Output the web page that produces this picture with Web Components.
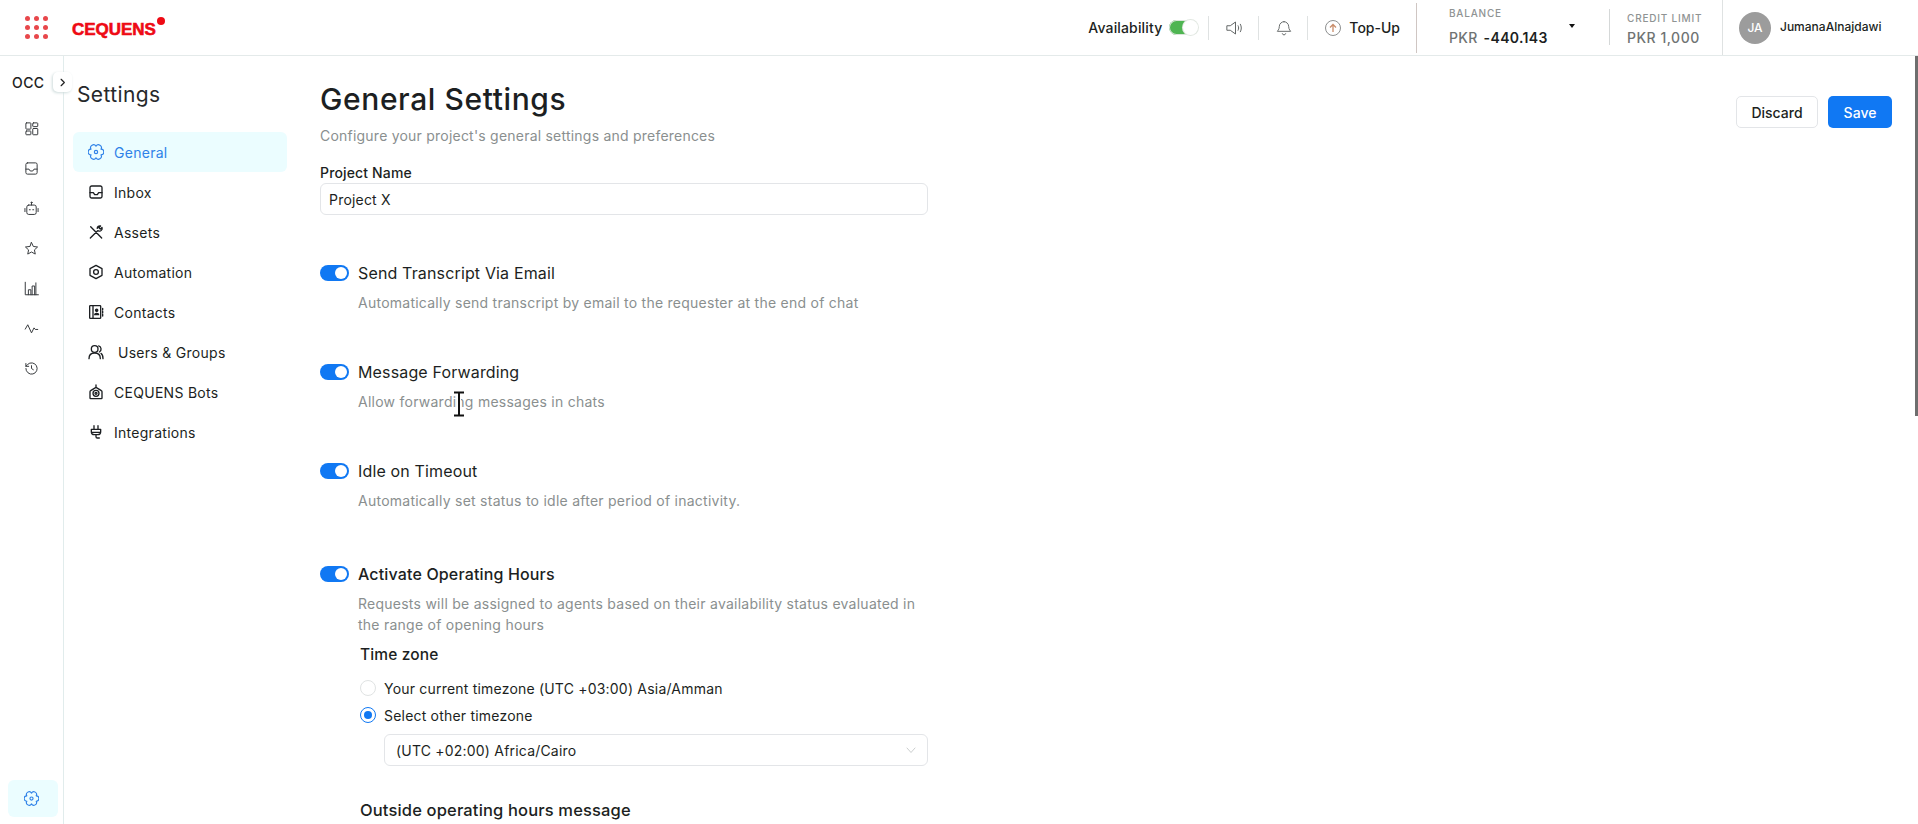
<!doctype html>
<html>
<head>
<meta charset="utf-8">
<title>General Settings</title>
<style>
  html, body { margin: 0; height: 100%; background: #fff; overflow: hidden; }
  body { font-family: Inter, "Liberation Sans", sans-serif; color: #1c1f22; }
  cq-page { height: 824px; }
</style>
</head>
<body>
<cq-page>
  <cq-header slot="header"></cq-header>
  <cq-rail slot="rail"></cq-rail>
  <cq-settings-nav slot="nav"></cq-settings-nav>
  <cq-general-settings></cq-general-settings>
</cq-page>

<script>
const ICONS = {
  gear: `<path d="M19.500 7.700A4.200 4.200 0 0 1 19.500 16.300A4.200 4.200 0 0 1 12 20.600A4.200 4.200 0 0 1 4.500 16.300A4.200 4.200 0 0 1 4.500 7.700A4.200 4.200 0 0 1 12 3.400A4.200 4.200 0 0 1 19.500 7.700z"/><circle cx="12" cy="12" r="2.500"/>`,
  dashboard: `<rect x="3" y="3" width="8" height="10" rx="1"/><rect x="14" y="3" width="8" height="6" rx="1"/><rect x="3" y="16" width="8" height="6" rx="1"/><rect x="14" y="12" width="8" height="10" rx="1"/>`,
  inbox: `<path d="M5.500 3h13a2.500 2.500 0 0 1 2.500 2.500v13a2.500 2.500 0 0 1-2.500 2.500h-13A2.500 2.500 0 0 1 3 18.500v-13A2.500 2.500 0 0 1 5.500 3z"/><path d="M3 13h5l2 3h4l2-3h5"/>`,
  bot: `<rect x="4.500" y="6.500" width="15" height="15" rx="3"/><path d="M12 6.500V3M1.500 12v5M22.500 12v5M8.500 14h1.500M14 14h1.500"/><circle cx="12" cy="2.500" r=".9"/>`,
  star: `<path d="M12 2.500l2.900 6.200 6.800.9-5 4.600 1.300 6.700-6-3.300-6 3.300 1.300-6.700-5-4.600 6.800-.9z"/>`,
  chart: `<path d="M2 2v20h21M7 22v-8h4v8M13 22V8h4v14M19 22V3"/>`,
  pulse: `<path d="M2 13l4-7 6 13 4-8 2 2.500h4"/>`,
  history: `<path d="M3 12a9 9 0 1 0 2.800-6.500L3 8.500M3 4v4.500h4.500M12 7.500V12l3 2"/>`,
  tools: `<path d="M3.500 21L14.500 10M13.800 6.500a4 4 0 0 1 5-3.500l-2.500 2.500 2.200 2.200L21 5.200a4 4 0 0 1-5.500 5M4 4l16.500 17"/>`,
  hexagon: `<path d="M12 2l9 5v10l-9 5-9-5V7z"/><circle cx="12" cy="12" r="3.600"/>`,
  contacts: `<rect x="2.500" y="2.500" width="16.500" height="19" rx="1"/><path d="M7.500 2.500v19M22 6.500v2.500M22 11v2.500M22 15.500v2.500"/><circle cx="13" cy="9.500" r="1.700" fill="currentColor"/><path d="M10 16c0-2.500 6-2.500 6 0z" fill="currentColor"/>`,
  users: `<circle cx="10" cy="7.500" r="5"/><path d="M1.500 22c0-5.500 3.800-8.500 8.500-8.500s8.500 3 8.500 8.500M16 2.800a5 5 0 0 1 1 9.200M19.500 14c2 1.200 3 4 3 8"/>`,
  botframe: `<path d="M12 1.500V5M12 5l8 5a2 2 0 0 1 1 1.700V21a1 1 0 0 1-1 1H4a1 1 0 0 1-1-1v-9.300a2 2 0 0 1 1-1.700z"/><circle cx="12" cy="14" r="4.500"/><circle cx="12" cy="14" r="1.500"/>`,
  plug: `<path d="M9 2.500V8M15 2.500V8M5 8h14v3.500a4.500 4.500 0 0 1-4.500 4.500h-5A4.500 4.500 0 0 1 5 11.500zM5 12.500h14M12 16v3a2 2 0 0 0 2 2h3"/>`,
  speaker: `<path d="M3 9h4l7-5v16l-7-5H3zM17.500 9c1 1.800 1 4.200 0 6M20.500 7c1.700 3 1.700 7 0 10"/>`,
  bell: `<path d="M12 2.500a7 7 0 0 0-7 7c0 5-3 7-3 7.500h20c0-.5-3-2.500-3-7.500a7 7 0 0 0-7-7zM9.500 20.500a2.600 2.600 0 0 0 5 0"/>`,
  chevronRight: `<path d="M9 5l7 7-7 7"/>`,
  chevronDown: `<path d="M4 8l8 9 8-9"/>`
};

// Small base so every element only has to give its markup
class ShadowElement extends HTMLElement {
  constructor() {
    super();
    this.shadow = this.attachShadow({ mode: "open" });
  }

  template() {
    return "";
  }

  connectedCallback() {
    this.shadow.innerHTML = this.template();
  }
}

class CqIcon extends ShadowElement {
  template() {
    const name = this.getAttribute("name");
    const width = this.getAttribute("stroke") || "2";
    return `
<style>
  :host { display: inline-flex; width: var(--icon-size, 16px); height: var(--icon-size, 16px); flex: none; }
  svg { width: 100%; height: 100%; fill: none; stroke: currentColor; stroke-linecap: round; stroke-linejoin: round; }
</style>
<svg viewBox="0 0 24 24" stroke-width="${width}">${ICONS[name]}</svg>`;
  }
}

class CqPage extends ShadowElement {
  template() {
    return `
<style>
  :host { display: grid; grid-template-columns: 64px 256px 1fr; grid-template-rows: 56px 1fr; position: relative; overflow: hidden; }
  .header { grid-column: 1 / -1; display: block; }
  .cursor { position: absolute; left: 452px; top: 391px; width: 14px; height: 26px; }
  .thumb { position: absolute; right: 0; top: 56px; width: 3px; height: 360px; background: #6e6e6e; }
</style>
<div class="header"><slot name="header"></slot></div>
<slot name="rail"></slot>
<slot name="nav"></slot>
<slot></slot>
<svg class="cursor" viewBox="0 0 14 26"><path d="M2 1.500h10M2 24.500h10M7 1.500v23" fill="none" stroke="#fff" stroke-width="4"/><path d="M2 1.500h10M2 24.500h10M7 1.500v23" fill="none" stroke="#111" stroke-width="2"/></svg>
<div class="thumb"></div>`;
  }
}

class CqHeader extends ShadowElement {
  template() {
    const dots = Array.from({ length: 9 }, () => "<i></i>").join("");
    return `
<style>
  :host { display: flex; align-items: center; height: 55px; border-bottom: 1px solid #e4eaea; font-size: 14px; background: #fff; }
  .dots { display: grid; grid-template-columns: repeat(3, 5px); gap: 4px; margin-left: 25px; }
  .dots i { width: 5px; height: 5px; border-radius: 50%; background: #e8474b; }
  .logo { position: relative; top: 2px; margin-left: 24px; font: 900 17px/20px "Liberation Sans", sans-serif; color: #ee0a14; letter-spacing: -.05px; -webkit-text-stroke: .6px #ee0a14; }
  .logo::after { content: ""; position: absolute; left: 85px; top: -3px; width: 8px; height: 8px; border-radius: 50%; background: #ee0a14; }
  .tools { margin-left: auto; display: flex; align-items: center; height: 100%; color: #1c1f22; }
  .avail { letter-spacing: .15px; font-weight: 500; }
  .sep { width: 1px; height: 24px; background: #dfe2e2; }
  .switch { width: 29px; height: 15px; margin: 0 10px 0 7px; border-radius: 8px; background: linear-gradient(90deg, #4fb552 55%, #fff 55%); box-shadow: inset 0 0 0 1px #dbe5db; position: relative; }
  .switch::after { content: ""; position: absolute; right: 0; top: 0; width: 15px; height: 15px; border-radius: 50%; background: #fff; box-shadow: 0 0 0 1px #e2e8e2; }
  .gray { color: #5f6363; }
  .speaker { margin: 0 15px 0 16px; }
  .bell { margin: 0 15px 0 17px; }
  .topup { display: flex; align-items: center; gap: 8px; margin: 0 16px 0 17px; font-weight: 500; font-size: 14px; }
  .up { width: 16px; height: 16px; border-radius: 50%; border: 1px solid #8d8f8f; display: grid; place-items: center; box-sizing: border-box; color: #c98d6b; }
  .up svg { width: 10px; height: 10px; }
  .balance { width: 193px; height: 50px; align-self: flex-start; margin-top: 3px; border-left: 1px solid #cfc6c3; padding-left: 32px; box-sizing: border-box; position: relative; }
  .cap { font-size: 10px; line-height: 12px; letter-spacing: .8px; color: #8f9393; font-weight: 500; display: block; }
  .balance .cap { margin-top: 4px; }
  .amount { display: block; margin-top: 9px; font-size: 14px; line-height: 20px; letter-spacing: .35px; font-weight: 600; color: #1c1f22; }
  .amount small { font-size: 14px; font-weight: 500; color: #6f7373; margin-right: 2px; }
  .caret { position: absolute; left: 152px; top: 21px; border: 3.5px solid transparent; border-top: 4px solid #111; border-bottom: 0; }
  .credit { width: 113px; height: 36px; box-sizing: border-box; border-left: 1px solid #d5d8d8; padding-left: 17px; margin-top: -1px; }
  .credit .cap { margin-top: 3px; }
  .credit .amount { margin-top: 4px; font-size: 14px; color: #6f7373; font-weight: 500; letter-spacing: .5px; }
  .user { width: 196px; height: 100%; border-left: 1px solid #dfe2e2; display: flex; align-items: center; gap: 9px; padding-left: 16px; box-sizing: border-box; font-size: 12px; font-weight: 500; }
  .avatar { width: 32px; height: 32px; border-radius: 50%; background: #9c9c9c; color: #fff; display: grid; place-items: center; font-size: 12px; }
  .user span:last-child { margin-top: -3px; }
</style>
<div class="dots">${dots}</div>
<div class="logo">CEQUENS</div>
<div class="tools">
  <span class="avail">Availability</span>
  <div class="switch"></div>
  <div class="sep"></div>
  <cq-icon class="gray speaker" name="speaker" stroke="1.300" style="--icon-size:18px"></cq-icon>
  <div class="sep"></div>
  <cq-icon class="gray bell" name="bell" stroke="1.400" style="--icon-size:16px"></cq-icon>
  <div class="sep"></div>
  <div class="topup">
    <span class="up"><svg viewBox="0 0 10 10" fill="none" stroke="currentColor" stroke-width="1.300"><path d="M5 9V1.500M2 4.500l3-3 3 3"/></svg></span>
    <span>Top-Up</span>
  </div>
  <div class="balance">
    <span class="cap">BALANCE</span>
    <span class="amount"><small>PKR</small> -440.143</span>
    <i class="caret"></i>
  </div>
  <div class="credit">
    <span class="cap">CREDIT LIMIT</span>
    <span class="amount">PKR 1,000</span>
  </div>
  <div class="user">
    <span class="avatar">JA</span>
    <span>JumanaAlnajdawi</span>
  </div>
</div>`;
  }
}

class CqRail extends ShadowElement {
  template() {
    const names = ["dashboard", "inbox", "bot", "star", "chart", "pulse", "history"];
    return `
<style>
  :host { display: flex; flex-direction: column; align-items: center; height: 768px; box-sizing: border-box; border-right: 1px solid #e1ecec; position: relative; padding-bottom: 7px; color: #3a3d40; }
  .occ { align-self: flex-start; margin: 18px 0 0 12px; font-size: 14px; line-height: 17px; font-weight: 500; letter-spacing: .4px; color: #222; }
  .toggle { position: absolute; left: 53px; top: 16px; width: 19px; height: 20px; background: #fff; border-radius: 5px; box-shadow: -1px 1px 3px #cfdcdc; display: grid; place-items: center; color: #222; --icon-size: 11px; }
  .list { display: flex; flex-direction: column; gap: 25px; margin: 30px 0 0 0; --icon-size: 15px; }
  .active { margin-top: auto; width: 50px; height: 37px; box-sizing: border-box; padding-right: 4px; border-radius: 6px; background: #ebfdff; display: grid; place-items: center; color: #2f82e8; margin-left: 3px; --icon-size: 15px; }
</style>
<div class="occ">OCC</div>
<div class="toggle"><cq-icon name="chevronRight" stroke="2.600"></cq-icon></div>
<div class="list">${names.map((n) => `<cq-icon name="${n}" stroke="1.600"></cq-icon>`).join("")}</div>
<div class="active"><cq-icon name="gear" stroke="1.800"></cq-icon></div>`;
  }
}

class CqSettingsNav extends ShadowElement {
  template() {
    const items = [
      ["gear", "General"], ["inbox", "Inbox"], ["tools", "Assets"], ["hexagon", "Automation"],
      ["contacts", "Contacts"], ["users", "Users &amp; Groups"], ["botframe", "CEQUENS Bots"], ["plug", "Integrations"]
    ];
    return `
<style>
  :host { display: block; padding: 26px 0 0 9px; }
  h2 { margin: 0 0 24px 4px; font-size: 21px; line-height: 26px; font-weight: 400; letter-spacing: .4px; color: #26282a; }
  ul { margin: 0; padding: 0; list-style: none; width: 214px; }
  li { display: flex; align-items: center; gap: 10px; height: 40px; padding-left: 15px; font-size: 14px; font-weight: 400; color: #1c1f22; letter-spacing: .28px; border-radius: 6px; --icon-size: 16px; }
  li.on { background: #ebfdff; color: #2f82e8; }
  li.wide span { margin-left: 4px; }
</style>
<h2>Settings</h2>
<ul>${items.map(([icon, label], i) => `<li class="${i === 0 ? "on" : ""} ${i === 5 ? "wide" : ""}"><cq-icon name="${icon}" stroke="${i === 0 ? 1.7 : 2}"></cq-icon><span>${label}</span></li>`).join("")}</ul>`;
  }
}

class CqToggleRow extends ShadowElement {
  template() {
    const weight = this.hasAttribute("strong") ? 500 : 400;
    return `
<style>
  :host { display: block; }
  .row { display: flex; align-items: center; gap: 9px; height: 22px; font-size: 16px; font-weight: ${weight}; letter-spacing: .15px; color: #1c1f22; }
  .toggle { width: 29px; height: 16px; border-radius: 8px; background: #1078f3; position: relative; flex: none; }
  .toggle::after { content: ""; position: absolute; right: 2px; top: 2px; width: 12px; height: 12px; border-radius: 50%; background: #fff; }
  .desc { margin: 8px 0 0 38px; font-size: 14px; line-height: 21px; color: #8a8f8f; letter-spacing: .25px; width: 580px; }
</style>
<div class="row"><span class="toggle"></span><span>${this.getAttribute("label")}</span></div>
<div class="desc"><slot></slot></div>`;
  }
}

class CqRadio extends ShadowElement {
  template() {
    const on = this.hasAttribute("checked");
    return `
<style>
  :host { display: flex; align-items: center; gap: 8px; height: 22px; font-size: 14px; font-weight: 400; letter-spacing: .2px; color: #1c1f22; }
  .dot { width: 16px; height: 16px; border-radius: 50%; box-sizing: border-box; border: 1px solid ${on ? "#1078f3" : "#e0e3e3"}; display: grid; place-items: center; }
  .dot i { width: 8px; height: 8px; border-radius: 50%; background: ${on ? "#1078f3" : "transparent"}; }
</style>
<span class="dot"><i></i></span><slot></slot>`;
  }
}

class CqGeneralSettings extends ShadowElement {
  template() {
    return `
<style>
  :host { display: block; position: relative; padding-top: 21px; }
  h1 { margin: 0; font-size: 30px; line-height: 44px; font-weight: 500; letter-spacing: .6px; color: #1c1f22; }
  .sub { margin: 4px 0 0; font-size: 14px; line-height: 22px; letter-spacing: .22px; color: #8a8f8f; }
  .actions { position: absolute; top: 40px; right: 26px; display: flex; gap: 10px; }
  button { height: 32px; border-radius: 5px; font: 500 14px Inter, sans-serif; padding: 0; }
  .discard { width: 82px; background: #fff; border: 1px solid #e3e5e8; color: #1c1f22; }
  .save { width: 64px; background: #1078f3; border: 0; color: #fff; }
  label { display: block; margin-top: 16px; font-size: 14px; line-height: 20px; font-weight: 500; letter-spacing: .15px; color: #1c1f22; }
  .field { box-sizing: border-box; width: 608px; height: 32px; border: 1px solid #e3e5e8; border-radius: 6px; display: flex; align-items: center; padding-left: 8px; font-size: 14px; font-weight: 400; letter-spacing: .2px; color: #1c1f22; }
  .stack { margin-top: 47px; width: 608px; }
  cq-toggle-row + cq-toggle-row { margin-top: 48px; }
  cq-toggle-row:last-child { margin-top: 52px; }
  .hours { padding-left: 40px; }
  h3 { margin: 0; font-size: 15.500px; line-height: 22px; font-weight: 500; letter-spacing: .15px; color: #1c1f22; }
  .select { width: 544px; margin: 8px 0 0 24px; padding-left: 11px; justify-content: space-between; padding-right: 10px; font-size: 14px; --icon-size: 12px; }
  .select cq-icon { color: #b9bdbd; }
</style>
<h1>General Settings</h1>
<p class="sub">Configure your project's general settings and preferences</p>
<div class="actions">
  <button class="discard">Discard</button>
  <button class="save">Save</button>
</div>
<label>Project Name</label>
<div class="field">Project X</div>
<div class="stack">
  <cq-toggle-row label="Send Transcript Via Email">Automatically send transcript by email to the requester at the end of chat</cq-toggle-row>
  <cq-toggle-row label="Message Forwarding">Allow forwarding messages in chats</cq-toggle-row>
  <cq-toggle-row label="Idle on Timeout">Automatically set status to idle after period of inactivity.</cq-toggle-row>
  <cq-toggle-row label="Activate Operating Hours" strong>Requests will be assigned to agents based on their availability status evaluated in the range of opening hours</cq-toggle-row>
</div>
<div class="hours">
  <h3 style="margin-top:9px">Time zone</h3>
  <div style="margin-top:11px;display:flex;flex-direction:column;gap:5px">
    <cq-radio>Your current timezone (UTC +03:00) Asia/Amman</cq-radio>
    <cq-radio checked>Select other timezone</cq-radio>
  </div>
  <div class="field select"><span>(UTC +02:00) Africa/Cairo</span><cq-icon name="chevronDown" stroke="1.500"></cq-icon></div>
  <h3 style="margin-top:33px;font-size:16.500px">Outside operating hours message</h3>
</div>`;
  }
}

customElements.define("cq-icon", CqIcon);
customElements.define("cq-page", CqPage);
customElements.define("cq-header", CqHeader);
customElements.define("cq-rail", CqRail);
customElements.define("cq-settings-nav", CqSettingsNav);
customElements.define("cq-toggle-row", CqToggleRow);
customElements.define("cq-radio", CqRadio);
customElements.define("cq-general-settings", CqGeneralSettings);
</script>
</body>
</html>
